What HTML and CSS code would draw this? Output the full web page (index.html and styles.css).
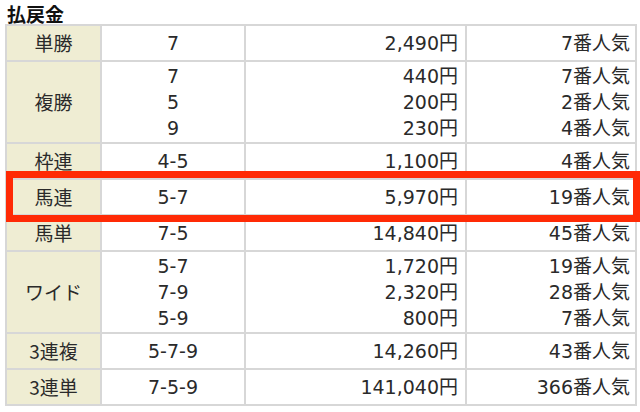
FILE: index.html
```html
<!DOCTYPE html>
<html lang="ja">
<head>
<meta charset="utf-8">
<link rel="stylesheet" href="styles.css">
</head>
<body>
<div class="page">
  <h2 class="title">払戻金</h2>
  <table class="payout">
    <colgroup>
      <col class="c-type"><col class="c-num"><col class="c-yen"><col class="c-pop">
    </colgroup>
    <tr>
      <th>単勝</th><td class="num">7</td><td class="yen">2,490円</td><td class="pop">7番人気</td>
    </tr>
    <tr class="multi">
      <th>複勝</th><td class="num">7<br>5<br>9</td><td class="yen">440円<br>200円<br>230円</td><td class="pop">7番人気<br>2番人気<br>4番人気</td>
    </tr>
    <tr>
      <th>枠連</th><td class="num">4-5</td><td class="yen">1,100円</td><td class="pop">4番人気</td>
    </tr>
    <tr>
      <th>馬連</th><td class="num">5-7</td><td class="yen">5,970円</td><td class="pop">19番人気</td>
    </tr>
    <tr>
      <th>馬単</th><td class="num">7-5</td><td class="yen">14,840円</td><td class="pop">45番人気</td>
    </tr>
    <tr class="multi">
      <th>ワイド</th><td class="num">5-7<br>7-9<br>5-9</td><td class="yen">1,720円<br>2,320円<br>800円</td><td class="pop">19番人気<br>28番人気<br>7番人気</td>
    </tr>
    <tr>
      <th>3連複</th><td class="num">5-7-9</td><td class="yen">14,260円</td><td class="pop">43番人気</td>
    </tr>
    <tr>
      <th>3連単</th><td class="num">7-5-9</td><td class="yen">141,040円</td><td class="pop">366番人気</td>
    </tr>
  </table>
  <div class="highlight"></div>
</div>
</body>
</html>
```

FILE: styles.css
```css
html, body {
  margin: 0;
  padding: 0;
  background: #fff;
  overflow: hidden;
}
.page {
  position: relative;
  width: 640px;
  height: 412px;
  font-family: "DejaVu Sans", "Noto Sans CJK JP", sans-serif;
  color: #2a2a2a;
}
.title {
  margin: 0;
  padding: 4px 0 0 7px;
  height: 20px;
  font-family: "Noto Sans CJK JP", sans-serif;
  font-size: 19px;
  line-height: 20px;
  font-weight: bold;
  color: #111;
}
.payout {
  margin-left: 5px;
  border-collapse: separate;
  border-spacing: 0;
  table-layout: fixed;
  width: 632px;
  border-top: 2px solid #d7d7d7;
  border-left: 2px solid #d7d7d7;
  font-size: 19px;
}
.c-type { width: 95px; }
.c-num { width: 144px; }
.c-yen { width: 221px; }
.c-pop { width: 170px; }
.payout th,
.payout td {
  box-sizing: border-box;
  border-right: 2px solid #d7d7d7;
  border-bottom: 2px solid #d7d7d7;
  padding: 0 6px;
  line-height: 34px;
  height: 36px;
  font-weight: normal;
  white-space: nowrap;
  vertical-align: middle;
}
.payout tr.multi th,
.payout tr.multi td {
  line-height: 26px;
  padding-top: 1px;
  padding-bottom: 1px;
  height: 82px;
}
.payout th {
  background: #efedd3;
  text-align: center;
  font-family: "Noto Sans CJK JP", sans-serif;
}
.num { text-align: center; }
.yen { text-align: right; padding-right: 7px !important; }
.pop { text-align: right; padding-right: 5px !important; }
.highlight {
  position: absolute;
  left: 6px;
  top: 171px;
  width: 634px;
  height: 51px;
  box-sizing: border-box;
  border: 7px solid #ff2a05;
}
```
